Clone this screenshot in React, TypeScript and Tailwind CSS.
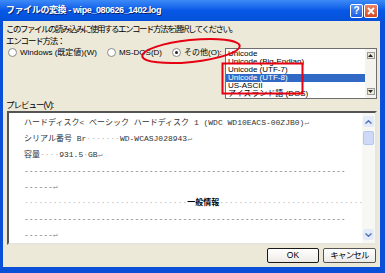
import React from 'react';

const Ret = () => <span className="text-[#9a9a9a]">↵</span>;

const Dots = ({ n }: { n: number }) => (
  <span className="text-[#b0b0b0]">{'·'.repeat(n)}</span>
);

const Radio = ({ checked, label, className = '' }: { checked?: boolean; label: string; className?: string }) => (
  <div className={`flex items-center gap-[3px] shrink-0 whitespace-nowrap ${className}`}>
    <span className="w-[9px] h-[9px] shrink-0 rounded-full border border-[#8a8a8a] bg-white flex items-center justify-center">
      {checked && <span className="w-[3px] h-[3px] rounded-full bg-[#222]" />}
    </span>
    <span>{label}</span>
  </div>
);

const encodings = [
  'Unicode',
  'Unicode (Big-Endian)',
  'Unicode (UTF-7)',
  'Unicode (UTF-8)',
  'US-ASCII',
  'アイスランド語 (DOS)',
];

export default function App() {
  return (
    <div className="w-[385px] h-[273px] bg-[#0a4fd8] flex flex-col overflow-hidden font-['Liberation_Sans','Noto_Sans_CJK_JP',sans-serif] text-black">
      {/* Title bar */}
      <div className="h-[21px] shrink-0 flex items-center pl-[6px] pr-[7px] bg-gradient-to-b from-[#3d8af7] via-[#0758e6] to-[#0550d8]">
        <span className="text-white font-bold text-[9px] tracking-[-0.4px] [text-shadow:1px_1px_0_#0a246a]">
          ファイルの変換 - wipe_080626_1402.log
        </span>
        <div className="ml-auto flex gap-[1px]">
          <div className="w-[13px] h-[14px] rounded-[2px] border border-white bg-gradient-to-b from-[#5a94f5] to-[#1c5fe6] text-white text-[10px] font-bold leading-[12px] text-center">
            ?
          </div>
          <div className="w-[14px] h-[14px] rounded-[2px] border border-white bg-gradient-to-b from-[#e98563] to-[#d34a22] flex items-center justify-center">
            <svg width="8" height="8" viewBox="0 0 8 8">
              <path d="M1 1L7 7M7 1L1 7" stroke="white" strokeWidth="1.8" />
            </svg>
          </div>
        </div>
      </div>

      {/* Body */}
      <div className="relative flex-1 ml-[3px] mr-[5px] mb-[6px] bg-[#ece9d8] flex flex-col pt-[2px] text-[8.5px]">
        <div className="h-[12px] leading-[12px] pl-[3px] tracking-[-1.5px] whitespace-nowrap">
          このファイルの読み込みに使用するエンコード方法を選択してください。
        </div>
        <div className="h-[12px] leading-[12px] pl-[3px] tracking-[-1.2px]">エンコード方法：</div>

        <div className="flex items-start h-[52px]">
          <div className="flex-1 min-w-0 flex items-center h-[11px] leading-[11px] pl-[5px] text-[8px]">
            <Radio label="Windows (既定値)(W)" />
            <Radio label="MS-DOS(D)" className="ml-[10px]" />
            <Radio label="その他(O):" checked className="ml-[10px]" />
          </div>
          <div className="w-[152px] h-[51px] shrink-0 mt-[1px] mr-[3px] border border-[#6f6f6f] bg-white flex overflow-hidden">
            <div className="flex-1 flex flex-col pt-[1px] text-[8px]">
              {encodings.map((e, i) => (
                <div
                  key={e}
                  className={`h-[8px] leading-[8px] pl-[2px] whitespace-nowrap ${i === 3 ? 'bg-[#316ac5] text-white' : ''}`}
                >
                  {e}
                </div>
              ))}
            </div>
            <div className="w-[11px] bg-[#f4f3ee] flex flex-col items-center justify-between py-[3px]">
              <div className="w-[8px] h-[7px] border border-[#9a9a9a] bg-[#ece9d8] flex items-center justify-center">
                <svg width="5" height="3" viewBox="0 0 5 3"><path d="M0 3L2.5 0L5 3Z" fill="#222" /></svg>
              </div>
              <div className="w-[8px] h-[7px] border border-[#9a9a9a] bg-[#ece9d8] flex items-center justify-center">
                <svg width="5" height="3" viewBox="0 0 5 3"><path d="M0 0L2.5 3L5 0Z" fill="#222" /></svg>
              </div>
            </div>
          </div>
        </div>

        <div className="h-[12px] leading-[12px] pl-[3px] tracking-[-1px]">プレビュー(V):</div>

        {/* Preview */}
        <div className="h-[134px] ml-[4px] mr-[3px] border-2 border-t-[#555] border-l-[#555] border-r-[#e8e6dc] border-b-[#e8e6dc] bg-white flex overflow-hidden">
          <div className="flex-1 pt-[2px] pl-[15px] text-[8px] text-[#333] font-['Liberation_Mono','Noto_Sans_CJK_JP',monospace] overflow-hidden">
            <div className="h-[16px] leading-[16px] whitespace-nowrap">
              ハードディスク&lt; ベーシック ハードディスク 1 (WDC WD10EACS-00ZJB0)<Ret />
            </div>
            <div className="h-[16px] leading-[16px] whitespace-nowrap">
              シリアル番号 Br<Dots n={7} />WD-WCASJ028943<Ret />
            </div>
            <div className="h-[16px] leading-[16px] whitespace-nowrap">
              容量<Dots n={4} />931.5<Dots n={1} />GB<Ret />
            </div>
            <div className="h-[16px] leading-[16px] whitespace-nowrap text-[#666]">{'-'.repeat(67)}</div>
            <div className="h-[16px] leading-[16px] whitespace-nowrap text-[#666]">------<Ret /></div>
            <div className="h-[16px] leading-[16px] whitespace-nowrap">
              <Dots n={34} />
              <span className="font-bold text-black">一般情報</span>
              <Dots n={30} />
            </div>
            <div className="h-[16px] leading-[16px] whitespace-nowrap text-[#666]">{'-'.repeat(67)}</div>
            <div className="h-[16px] leading-[16px] whitespace-nowrap text-[#666]">------<Ret /></div>
          </div>
          <div className="w-[13px] bg-[#f7f7f3] flex flex-col justify-between items-center py-[3px]">
            <div className="flex flex-col items-center gap-[4px]">
              <div className="w-[11px] h-[11px] rounded-[2px] bg-[#e3ebfb] flex items-center justify-center">
                <svg width="7" height="4" viewBox="0 0 7 4"><path d="M0.5 3.5L3.5 0.8L6.5 3.5" stroke="#4d6fb8" strokeWidth="1.4" fill="none" /></svg>
              </div>
              <div className="w-[11px] h-[14px] rounded-[2px] bg-[#cdd9f7] border border-[#b5c7f1]" />
            </div>
            <div className="w-[11px] h-[11px] rounded-[2px] bg-[#e3ebfb] flex items-center justify-center">
              <svg width="7" height="4" viewBox="0 0 7 4"><path d="M0.5 0.5L3.5 3.2L6.5 0.5" stroke="#4d6fb8" strokeWidth="1.4" fill="none" /></svg>
            </div>
          </div>
        </div>

        {/* Buttons */}
        <div className="flex justify-end gap-[4px] mt-[3px] mr-[4px] text-[8.5px]">
          <button className="w-[52px] h-[15px] rounded-[2px] border border-[#1a1a1a] bg-gradient-to-b from-white to-[#ecebe6] leading-[13px]">
            OK
          </button>
          <button className="w-[53px] h-[15px] rounded-[2px] border border-[#555] bg-gradient-to-b from-white to-[#ecebe6] leading-[13px] tracking-[-0.8px]">
            キャンセル
          </button>
        </div>

        {/* Red annotations */}
        <svg className="absolute inset-0 pointer-events-none overflow-visible" width="377" height="246">
          <ellipse cx="188" cy="30" rx="49" ry="11" transform="rotate(-6 188 30)" fill="none" stroke="#e60012" strokeWidth="2" />
          <rect x="219.5" y="42.5" width="80" height="30" fill="none" stroke="#e60012" strokeWidth="2" />
        </svg>
      </div>
    </div>
  );
}
